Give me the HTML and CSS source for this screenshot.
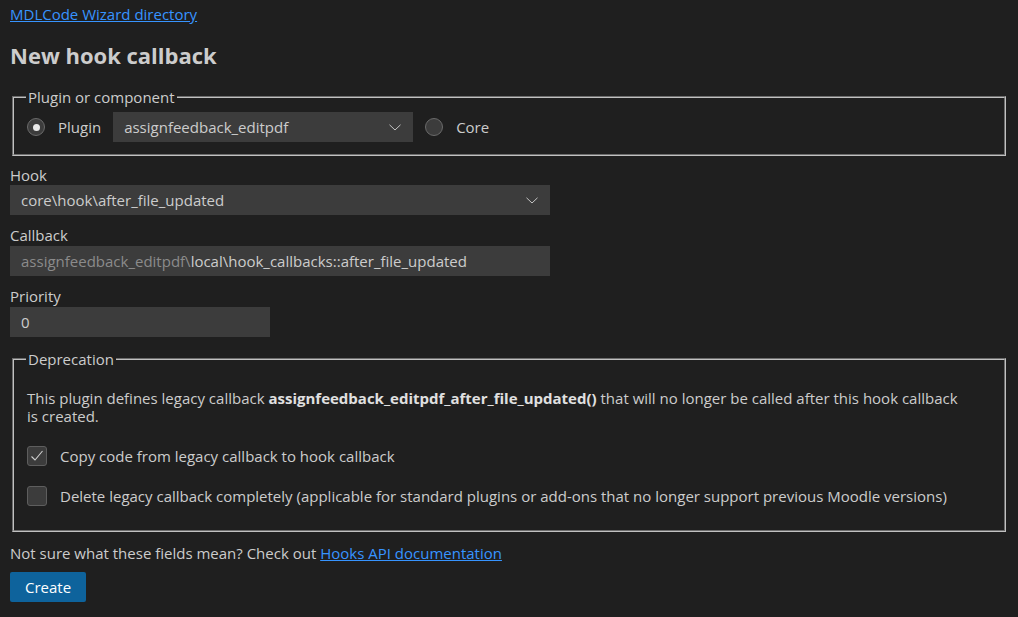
FILE: index.html
```html
<!DOCTYPE html>
<html>
<head>
<meta charset="utf-8">
<link rel="stylesheet" href="styles.css">
</head>
<body>
<p class="top"><a href="#">MDLCode Wizard directory</a></p>
<h1>New hook callback</h1>
<fieldset class="fs fs-plugin">
  <legend>Plugin or component</legend>
  <div class="row">
    <label class="radio"><span class="dot on"></span><span>Plugin</span></label>
    <div class="select plugin-select"><span>assignfeedback_editpdf</span>
      <svg class="chev" width="12" height="7" viewBox="0 0 12 7"><path d="M0.5 0.8 L6 6 L11.5 0.8" fill="none" stroke="#c5c5c5" stroke-width="1"/></svg>
    </div>
    <label class="radio"><span class="dot"></span><span>Core</span></label>
  </div>
</fieldset>

<div class="field">
  <div class="lbl">Hook</div>
  <div class="select wide"><span>core\hook\after_file_updated</span>
    <svg class="chev" width="12" height="7" viewBox="0 0 12 7"><path d="M0.5 0.8 L6 6 L11.5 0.8" fill="none" stroke="#c5c5c5" stroke-width="1"/></svg>
  </div>
</div>
<div class="field">
  <div class="lbl">Callback</div>
  <div class="input wide"><span class="pre">assignfeedback_editpdf\</span><span>local\hook_callbacks::after_file_updated</span></div>
</div>
<div class="field">
  <div class="lbl">Priority</div>
  <div class="input narrow"><span>0</span></div>
</div>

<fieldset class="fs fs-dep">
  <legend>Deprecation</legend>
  <p class="desc">This plugin defines legacy callback <b>assignfeedback_editpdf_after_file_updated()</b> that will no longer be called after this hook callback is created.</p>
  <label class="check"><span class="box"><svg width="20" height="20" viewBox="0 0 20 20"><path d="M4.5 10.5 L8 14 L15.5 5" fill="none" stroke="#d0d0d0" stroke-width="1.1"/></svg></span><span>Copy code from legacy callback to hook callback</span></label>
  <label class="check"><span class="box"></span><span>Delete legacy callback completely (applicable for standard plugins or add-ons that no longer support previous Moodle versions)</span></label>
</fieldset>

<p class="note">Not sure what these fields mean? Check out <a href="#">Hooks API documentation</a></p>
<button class="btn">Create</button>
</body>
</html>
```

FILE: styles.css
```css
html, body {
  margin: 0;
  background: #1f1f1f;
}
body {
  padding: 0 10px;
  color: #cccccc;
  font-family: "Open Sans", "Noto Sans", sans-serif;
  font-size: 15px;
  line-height: 18px;
}
a {
  color: #3794ff;
  text-decoration: underline;
}
.top {
  margin: 5px 0 0 0;
}
h1 {
  font-size: 22px;
  font-weight: 700;
  line-height: 30px;
  margin: 17px 0 0 0;
  color: #cccccc;
}
.fs {
  margin: 0 2px;
  border: 2px groove #c0c0c0;
  padding: 0 13px;
}
.fs legend {
  padding: 0 2px;
  margin-left: -1px;
}
.fs-plugin {
  margin-top: 18px;
  padding-top: 6px;
  padding-bottom: 12px;
}
.row {
  display: flex;
  align-items: center;
  gap: 12px;
}
.radio {
  display: flex;
  align-items: center;
  gap: 13px;
}
.dot {
  width: 16px;
  height: 16px;
  border-radius: 50%;
  border: 1px solid #6a6a6a;
  background: #3c3c3c;
  display: flex;
  align-items: center;
  justify-content: center;
}
.dot.on::after {
  content: "";
  width: 7px;
  height: 7px;
  border-radius: 50%;
  background: #e8e8e8;
}
.select, .input {
  height: 30px;
  background: #3c3c3c;
  display: flex;
  align-items: center;
  padding: 0 11px;
  box-sizing: border-box;
  color: #cccccc;
}
.select {
  justify-content: space-between;
}
.plugin-select {
  width: 300px;
}
.wide {
  width: 540px;
}
.narrow {
  width: 260px;
}
.chev {
  margin-right: 1px;
}
.field {
  margin-top: 10px;
}
.field + .field {
  margin-top: 11px;
}
.lbl {
  height: 18px;
  margin-bottom: 1px;
}
.field + .field .lbl {
  margin-bottom: 2px;
}
.input .pre {
  color: #8b8b8b;
}
.fs-dep {
  margin-top: 13px;
  padding-top: 21px;
  padding-bottom: 24px;
}
.desc {
  margin: 0 0 21px 0;
  max-width: 935px;
}
.desc b {
  color: #e0e0e0;
}
.check {
  display: flex;
  align-items: center;
  gap: 13px;
  margin-bottom: 20px;
}
.check:last-child {
  margin-bottom: 0;
}
.box {
  width: 20px;
  height: 20px;
  box-sizing: border-box;
  border: 1px solid #5e5e5e;
  border-radius: 3px;
  background: #3c3c3c;
  display: block;
  position: relative;
  flex: none;
}
.box svg {
  position: absolute;
  left: -1px;
  top: -1px;
}
.note {
  margin: 12px 0 0 0;
}
.btn {
  margin-top: 10px;
  background: #0e639c;
  color: #ffffff;
  border: none;
  border-radius: 2px;
  font-family: inherit;
  font-size: 15px;
  height: 30px;
  padding: 0 15px;
}
```
